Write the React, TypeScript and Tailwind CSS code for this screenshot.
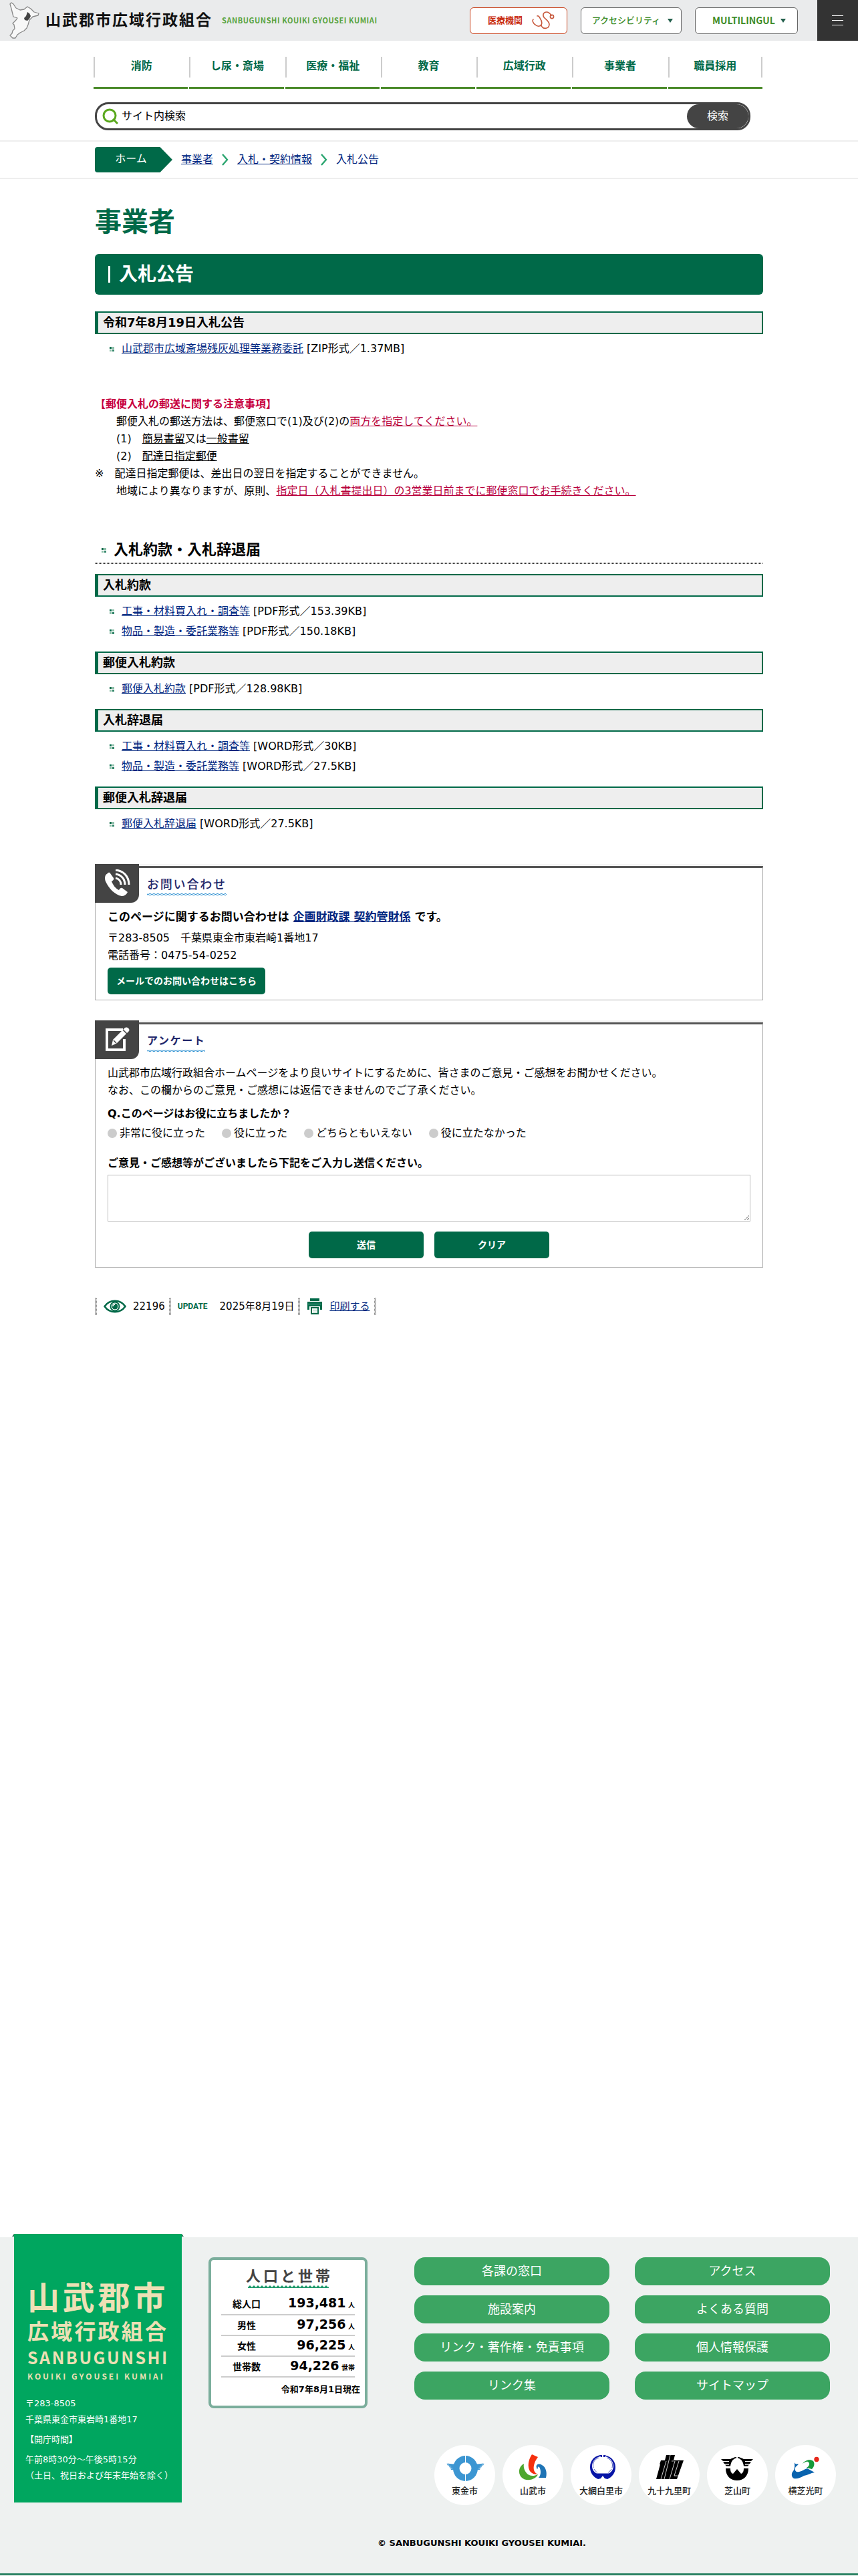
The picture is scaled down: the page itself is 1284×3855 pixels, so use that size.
import type { ReactNode } from "react";

const navItems = ["消防", "し尿・斎場", "医療・福祉", "教育", "広域行政", "事業者", "職員採用"];

const documentGroups = [
  {
    title: "入札約款",
    files: [
      { name: "工事・材料買入れ・調査等", info: "[PDF形式／153.39KB]" },
      { name: "物品・製造・委託業務等", info: "[PDF形式／150.18KB]" },
    ],
  },
  {
    title: "郵便入札約款",
    files: [{ name: "郵便入札約款", info: "[PDF形式／128.98KB]" }],
  },
  {
    title: "入札辞退届",
    files: [
      { name: "工事・材料買入れ・調査等", info: "[WORD形式／30KB]" },
      { name: "物品・製造・委託業務等", info: "[WORD形式／27.5KB]" },
    ],
  },
  {
    title: "郵便入札辞退届",
    files: [{ name: "郵便入札辞退届", info: "[WORD形式／27.5KB]" }],
  },
];

const answers = ["非常に役に立った", "役に立った", "どちらともいえない", "役に立たなかった"];

const population = [
  { label: "総人口", value: "193,481", unit: "人" },
  { label: "男性", value: "97,256", unit: "人" },
  { label: "女性", value: "96,225", unit: "人" },
  { label: "世帯数", value: "94,226", unit: "世帯" },
];

const footerLinks = [
  "各課の窓口",
  "アクセス",
  "施設案内",
  "よくある質問",
  "リンク・著作権・免責事項",
  "個人情報保護",
  "リンク集",
  "サイトマップ",
];

const municipalities: { name: string; mark: ReactNode }[] = [
  {
    name: "東金市",
    mark: (
      <g fill="#3c96d2">
        <path fillRule="evenodd" d="M45.500 16a18.500 19 0 1 0 0 38a18.500 19 0 1 0 0-38zM45.500 26a9 9 0 1 1 0 18a9 9 0 1 1 0-18z" />
        <path d="M17 27c5 1 9 2 14 1l-2 9h-5l-1-2h4l-6-2v-1h4l-7-2v-1h4zM74 27c-5 1-9 2-14 1l2 9h5l1-2h-4l6-2v-1h-4l7-2v-1h-4z" />
        <path d="M45 15h1v11h-1zM45 44h1v11h-1z" fill="#fff" />
      </g>
    ),
  },
  {
    name: "山武市",
    mark: (
      <>
        <path d="M31 28c-8 4-9 14-4 20 6 7 21 5 25-4-6 3-13 3-17-2-3-4-5-8-4-14z" fill="#4ea72e" />
        <path d="M43 14l9 4c-7 9-8 19-4 23 1 2 3 2 4 2-5 2-11-1-13-6-3-8 0-17 4-23z" fill="#f5300f" />
        <path d="M50 34c-2-5 4-7 8-4 6 3 8 11 6 19H53c3-3 4-9 2-14-1-3-4-3-3-1 0 2-2 2-2 0z" fill="#1f74b5" />
      </>
    ),
  },
  {
    name: "大網白里市",
    mark: (
      <>
        <path
          fillRule="evenodd"
          d="M46 15c-11 0-18 8-18 18 0 9 5 15 12 18l4-1 3-4 3 4 4 1c7-3 12-9 12-18 0-10-8-18-20-18zM47 16.500c9 0 16 7 16 15 0 5-3 9-7 11H38c-4-2-7-6-7-11 0-8 7-15 16-15z"
          fill="#0715a6"
        />
        <path d="M33 34c-2-7 2-13 8-15M61 34c2-7-2-13-8-15M34 36c1 2 3 4 5 5M60 36c-1 2-3 4-5 5" stroke="#0715a6" strokeWidth=".7" fill="none" />
        <path d="M46 14h2v4h-2z" fill="#fff" />
        <path d="M43 15h3v3h-2zM48 15h3l-1 3h-2z" fill="#0715a6" />
      </>
    ),
  },
  {
    name: "九十九里町",
    mark: (
      <>
        <path d="M40 15h13l-2 8h15l-10 28H25l6-22h-1l2-6h6z" fill="#000" />
        <path d="M46 15l-9 36M40 24l-8 27M53 24l-8 27M59 24l-7 22h5M48 24h3" stroke="#fff" strokeWidth=".8" fill="none" />
      </>
    ),
  },
  {
    name: "芝山町",
    mark: (
      <>
        <path d="M20 21h14c3-1 5-3 9-3v1.500c-5 1-8 5-9 12h-6l-2-2h6v-1.500h-7l-2-3h9V24h-9zM68 21H54c-3-1-5-3-9-3v1.500c5 1 8 5 9 12h6l2-2h-6v-1.500h7l2-3h-9V24h9z" fill="#000" />
        <path d="M27 35h7c0 4 1 7 4 8l6-7 6 7c3-1 4-4 4-8h7c0 11-7 18-17 18S27 46 27 35z" fill="#000" />
      </>
    ),
  },
  {
    name: "横芝光町",
    mark: (
      <>
        <path d="M28 26c1 3 4 3 6 2-1 3-5 4-5 7-1 4 2 6 6 5 5-1 8-4 12-5l11 6c-6 1-10 4-16 5-5 3-10 5-15 4-4-2-4-8-1-11 3-4 2-8 2-13z" fill="#0963ae" />
        <path d="M40 28c3-5 11-8 16-4 3 4 1 9-2 12l-8-2c4-2 6-7 2-9-2-1-5 1-8 3z" fill="#179a3b" />
        <circle cx="61" cy="21.500" r="3.700" fill="#e6281c" />
      </>
    ),
  },
];

function Bullet() {
  return (
    <svg className="h-[7px] w-[7px] shrink-0" viewBox="0 0 7 7">
      <path d="M0 0h3v3H0z" fill="#006948" />
      <path d="M4 0h3v3H4zM0 4h3v3H0z" fill="#8cbfa8" />
      <path d="M4 4h3v3H4z" fill="#33866a" />
    </svg>
  );
}

function BoxHeading({ children }: { children: ReactNode }) {
  return (
    <h3 className="border-2 border-l-[5px] border-[#006948] bg-[#eee] px-[7px] text-lg leading-[30px] font-bold">
      {children}
    </h3>
  );
}

function FileRow({ name, info }: { name: string; info: string }) {
  return (
    <li className="flex items-center pl-[22px] leading-[30px]">
      <Bullet />
      <span className="pl-[11px]">
        <a href="#" className="text-[#00267f] underline">{name}</a> {info}
      </span>
    </li>
  );
}

function Chevron() {
  return (
    <svg className="h-[18px] w-[10px]" viewBox="0 0 10 18" fill="none" stroke="#2aa56f" strokeWidth="2.400">
      <path d="M1 1l7 8-7 8" />
    </svg>
  );
}

function Divider() {
  return (
    <span className="h-[26px] w-[3px] bg-[repeating-conic-gradient(#888_0_25%,#eee_0_50%)] bg-[length:2px_2px]" />
  );
}

function Panel({ icon, title, titleClass, children }: { icon: ReactNode; title: string; titleClass: string; children: ReactNode }) {
  return (
    <section className="relative border-t-[3px] border-t-[#f5f5f5]">
      <div className="border border-t-[3px] border-[#aaa] border-t-[#555] px-[18px]">
        <div className="absolute -top-[3px] left-0 flex h-[58px] w-[66px] items-center justify-center rounded-br-xl bg-[#444]">
          {icon}
        </div>
        <h2 className="flex pt-2 pl-[59px]">
          <span className={titleClass}>
            {title}
            <span className="block h-[3px] bg-[repeating-conic-gradient(#2b8fd0_0_25%,#fff_0_50%)] bg-[length:2px_2px]" />
          </span>
        </h2>
        {children}
      </div>
    </section>
  );
}

function Header() {
  return (
    <header className="flex h-[61px] items-center bg-[#eaebec]">
      <a href="#" className="flex items-center pl-3">
        <svg className="h-[57px] w-[50px]" viewBox="12 2 50 57">
          <path
            d="M17 4l3 2 4 6 6 3 6-1 5-4 5 3 5 5 7 2-1 3-8 2-5 5-2 7-2 5-4 4-6 3-4 3-3 5h-4l-4-4 3-3 1-4 3-3-1-6-2-2 5-5 2-3-6-2-1-4-2-8-2-7z"
            fill="#f8f8f8"
            stroke="#888"
            strokeWidth="1.300"
            strokeLinejoin="round"
          />
          <path d="M41 18l3 2 2 4-2 4-3 3-4-1-1-3 3-3z" fill="#444" />
        </svg>
        <span className="pl-1.5 text-[23px] font-bold tracking-[2px] text-[#111]">山武郡市広域行政組合</span>
        <span className="pl-[14px] font-['Noto_Sans_CJK_JP',sans-serif] text-[11px] font-bold tracking-wider text-[#58a33e]">
          SANBUGUNSHI KOUIKI GYOUSEI KUMIAI
        </span>
      </a>
      <div className="ml-auto flex items-center gap-5">
        <a href="#" className="flex h-10 w-[146px] items-center justify-center gap-3.5 rounded-md border border-[#c8401a] bg-white pl-2 text-[13px] font-bold text-[#c8290b]">
          医療機関
          <svg className="h-[27px] w-[34px]" viewBox="0 0 34 27" fill="none" stroke="#c7583c" strokeWidth="1.600" strokeLinecap="round">
            <path d="M2 12c-2 2 0 6 3 8 3 3 7 3 9 0s0-7-2-10c-1-2-2-4-4-3" />
            <path d="M14 21c2 6 11 6 12-1 0-5-4-7-7-10-4-4-2-9 3-9 3 0 5 2 7 5" />
            <circle cx="30" cy="8" r="2.600" />
          </svg>
        </a>
        <button className="flex h-10 w-[151px] items-center justify-center gap-[11px] rounded-md border border-[#666] bg-white pl-1 text-[13px] font-medium text-[#3d8c27]">
          アクセシビリティ
          <span className="border-x-4 border-t-[6px] border-x-transparent border-t-[#24604d]" />
        </button>
        <button className="flex h-10 w-[154px] items-center justify-center gap-2 rounded-md border border-[#666] bg-white pl-2 font-['Noto_Sans_CJK_JP',sans-serif] text-[14px] font-bold text-[#3d8c27]">
          MULTILINGUL
          <span className="border-x-4 border-t-[6px] border-x-transparent border-t-[#24604d]" />
        </button>
        <button aria-label="メニュー" className="ml-[9px] flex h-[61px] w-[61px] flex-col items-center justify-center gap-[6px] bg-[#333]">
          <span className="h-px w-[17px] bg-white" />
          <span className="h-px w-[17px] bg-white" />
          <span className="h-px w-[17px] bg-white" />
        </button>
      </div>
    </header>
  );
}

function Footer() {
  return (
    <footer className="border-b-[3px] border-[#2a8262] bg-[#eef1f0]">
      <div className="flex items-start pl-[21px]">
        {/* Office information */}
        <div className="relative -mt-[5px] h-[402px] w-[251px] shrink-0 bg-[#00a65f] px-[17px] pt-[58px] text-white">
          <span className="absolute top-0 -left-[3px] border-b-[4px] border-l-[3px] border-b-[#1d6b4a] border-l-transparent" />
          <span className="absolute top-0 -right-[3px] border-r-[3px] border-b-[4px] border-r-transparent border-b-[#1d6b4a]" />
          <div className="pl-[3px] font-['Noto_Sans_CJK_JP',sans-serif] font-bold whitespace-nowrap text-[#ede0b5]">
            <p className="text-5xl leading-[68px] tracking-widest">山武郡市</p>
            <p className="text-[32px] leading-[36px] tracking-widest">広域行政組合</p>
            <p className="text-[25px] leading-[44px] tracking-widest">SANBUGUNSHI</p>
            <p className="text-xs leading-[14px] tracking-[3px]">KOUIKI GYOUSEI KUMIAI</p>
          </div>
          <div className="pt-[22px] text-[13px] leading-6 whitespace-nowrap">
            <p>〒283-8505</p>
            <p>千葉県東金市東岩崎1番地17</p>
            <p className="py-1.5">【開庁時間】</p>
            <p>午前8時30分〜午後5時15分</p>
            <p>（土日、祝日および年末年始を除く）</p>
          </div>
        </div>

        {/* Population */}
        <div className="mt-[30px] ml-10 h-[226px] w-[238px] shrink-0 rounded-lg border-4 border-[#7bae9c] bg-white px-[15px] pt-1.5">
          <h2 className="pl-1 text-center font-['Noto_Sans_CJK_JP',sans-serif] text-[22px] leading-8 font-bold tracking-[4px] text-[#444]">人口と世帯</h2>
          <svg className="mx-auto block h-1 w-[121px]" viewBox="0 0 121 4">
            <defs>
              <pattern id="scallop" width="6" height="4" patternUnits="userSpaceOnUse">
                <path d="M0 3l3-3 3 3v1H0z" fill="#1f9a6c" />
              </pattern>
            </defs>
            <rect width="121" height="4" fill="url(#scallop)" />
          </svg>
          <table className="mt-[9px] w-full">
            <tbody>
              {population.map((row) => (
                <tr key={row.label} className="h-[31px] border-b-2 border-[#ccc]">
                  <th className="w-[76px] text-center text-sm font-bold">{row.label}</th>
                  <td className="text-right text-[10px] leading-5 font-bold whitespace-nowrap">
                    <span className="text-[19px]">{row.value}</span> {row.unit}
                  </td>
                </tr>
              ))}
            </tbody>
          </table>
          <p className="-mr-2 pt-2 text-right text-[13px] font-bold">令和7年8月1日現在</p>
        </div>

        {/* Links */}
        <div className="mt-[30px] ml-[70px] flex-1 pr-[33px]">
          <div className="mr-[9px] grid grid-cols-2 gap-x-[38px] gap-y-[15px]">
            {footerLinks.map((link) => (
              <a key={link} href="#" className="rounded-2xl bg-[#3ca562] text-center text-lg leading-[42px] text-white">
                {link}
              </a>
            ))}
          </div>
          <div className="mt-[68px] flex justify-end gap-[11px]">
            {municipalities.map((town) => (
              <a key={town.name} href="#" className="flex h-[90px] w-[91px] shrink-0 flex-col items-center rounded-full bg-white pt-3 font-['Noto_Sans_CJK_JP',sans-serif] text-[13px] leading-5 font-medium whitespace-nowrap text-[#222]">
                <svg className="h-[46px] w-[90px]" viewBox="0 12 90 46">{town.mark}</svg>
                {town.name}
              </a>
            ))}
          </div>
        </div>
      </div>
      <p className="pt-[49px] pb-[37px] pl-[158px] text-center text-[13px] leading-4 font-bold">© SANBUGUNSHI KOUIKI GYOUSEI KUMIAI.</p>
    </footer>
  );
}

export default function App() {
  return (
    <div className="bg-white font-['DejaVu_Sans','Noto_Sans_CJK_JP',sans-serif] text-base text-black">
      <Header />

      {/* Navigation */}
      <nav className="mx-auto mt-6 flex max-w-[1004px] gap-0.5 pr-[3px]">
        {navItems.map((item) => (
          <a key={item} href="#" className="group flex-1 border-b-[3px] border-[#4a8a2a] pb-[14px] text-center font-bold text-[#006948]">
            <span className="block border-l-2 border-[#ccc] pb-[3px] leading-7 group-last:border-r-2">{item}</span>
          </a>
        ))}
      </nav>

      {/* Search */}
      <div className="mx-auto mt-5 max-w-[1000px]">
        <form className="mr-[19px] flex h-[42px] items-center rounded-[20px] border-[3px] border-[#444] pl-2">
          <svg className="h-6 w-6" viewBox="0 0 24 24" fill="none" stroke="#5aa81e" strokeWidth="3">
            <circle cx="11" cy="11" r="9" />
            <path d="M16 16l7 7" />
          </svg>
          <input type="text" aria-label="サイト内検索" placeholder="サイト内検索" className="min-w-0 flex-1 px-[5px] outline-none placeholder:text-black" />
          <button type="button" className="h-9 w-[92px] rounded-[18px] bg-[#444] text-white">検索</button>
        </form>
      </div>

      {/* Breadcrumb */}
      <div className="mt-[15px] border-y-2 border-[#eee] py-2">
        <div className="mx-auto flex h-[38px] max-w-[1000px] items-center gap-[13px] text-[#00267f]">
          <a href="#" className="h-[38px] w-[116px] rounded-l-sm bg-[#006948] pr-2 text-center leading-9 text-white [clip-path:polygon(0_0,84%_0,100%_50%,84%_100%,0_100%)]">
            ホーム
          </a>
          <a href="#" className="underline">事業者</a>
          <Chevron />
          <a href="#" className="underline">入札・契約情報</a>
          <Chevron />
          <span>入札公告</span>
        </div>
      </div>

      <main className="mx-auto max-w-[1000px] pt-[34px] pb-[1380px]">
        <p className="text-[40px] leading-[60px] font-bold text-[#006948]">事業者</p>
        <h1 className="mt-[18px] flex h-[61px] items-center rounded-md bg-[#006948] pl-5 text-[28px] font-bold text-white">
          <span className="mr-[13px] h-[25px] w-[3px] bg-white" />
          入札公告
        </h1>

        <div className="mt-[25px]">
          <BoxHeading>令和7年8月19日入札公告</BoxHeading>
          <ul className="mt-[7px]">
            <FileRow name="山武郡市広域斎場残灰処理等業務委託" info="[ZIP形式／1.37MB]" />
          </ul>
        </div>

        <div className="mt-[55px] leading-[26px]">
          <p className="font-bold text-[#c7003f]">【郵便入札の郵送に関する注意事項】</p>
          <p>　　郵便入札の郵送方法は、郵便窓口で(1)及び(2)の<u className="text-[#b8003c]">両方を指定してください。</u></p>
          <p>　　(1)　<u>簡易書留</u>又は<u>一般書留</u></p>
          <p>　　(2)　<u>配達日指定郵便</u></p>
          <p>※　配達日指定郵便は、差出日の翌日を指定することができません。</p>
          <p>　　地域により異なりますが、原則、<u className="text-[#b8003c]">指定日（入札書提出日）の3営業日前までに郵便窓口でお手続きください。</u></p>
        </div>

        <h2 className="mt-14 flex items-center pl-[10px] text-[22px] leading-[38px] font-bold">
          <Bullet />
          <span className="pl-[11px]">入札約款・入札辞退届</span>
        </h2>
        <div className="h-0.5 bg-[repeating-linear-gradient(90deg,#333_0_1px,#fff_1px_2px)]" />
        <div className="mt-[15px] flex flex-col gap-[15px]">
          {documentGroups.map((group) => (
            <div key={group.title}>
              <BoxHeading>{group.title}</BoxHeading>
              <ul className="mt-[7px]">
                {group.files.map((file) => (
                  <FileRow key={file.name} name={file.name} info={file.info} />
                ))}
              </ul>
            </div>
          ))}
        </div>

        {/* Contact */}
        <div className="mt-[45px]">
          <Panel
            title="お問い合わせ"
            titleClass="font-['Noto_Sans_CJK_JP',sans-serif] text-lg leading-[30px] font-medium tracking-widest text-[#23286b]"
            icon={
              <svg className="h-[42px] w-10" viewBox="0 0 40 42" fill="none" stroke="#fff">
                <path d="M6 6c-4 2-5 7-3 12 5 11 14 20 24 22 4 0 7-2 9-6l-8-6c-2-1-4 1-5 3-5-2-9-8-11-13 2-1 4-3 3-5L10 6C9 4 7 5 6 6z" fill="#fff" stroke="none" />
                <path d="M18 1c12 1 20 10 20 22M18 7c8 1 14 7 14 16M18 13c5 1 8 5 8 10" strokeWidth="3" />
              </svg>
            }
          >
            <p className="pt-4 text-[17px] leading-8 font-bold">
              このページに関するお問い合わせは <a href="#" className="text-[#00267f] underline">企画財政課 契約管財係</a> です。
            </p>
            <p className="pt-[3px] leading-[26px]">〒283-8505　千葉県東金市東岩崎1番地17</p>
            <p className="leading-[26px]">電話番号：0475-54-0252</p>
            <button className="mt-[5px] mb-2 block h-10 w-[236px] rounded-[5px] bg-[#006948] text-sm font-bold text-white">
              メールでのお問い合わせはこちら
            </button>
          </Panel>
        </div>

        {/* Questionnaire */}
        <div className="mt-[30px]">
          <Panel
            title="アンケート"
            titleClass="font-['Noto_Sans_CJK_JP',sans-serif] text-base leading-[30px] font-bold tracking-widest text-[#23286b]"
            icon={
              <svg className="h-[38px] w-[38px]" viewBox="0 0 38 38" fill="none">
                <path d="M28 4H4v30h26V18" stroke="#fff" strokeWidth="4" />
                <path d="M11 28l2-9L31 1c3-2 8 2 6 5L19 24z" fill="#fff" />
                <path d="M14 20l4 4M28 4l6 6" stroke="#444" strokeWidth="1.500" />
              </svg>
            }
          >
            <p className="pt-[19px] leading-[26px]">
              山武郡市広域行政組合ホームページをより良いサイトにするために、皆さまのご意見・ご感想をお聞かせください。
              <br />
              なお、この欄からのご意見・ご感想には返信できませんのでご了承ください。
            </p>
            <fieldset>
              <legend className="pt-[9px] leading-[26px] font-bold">Q.このページはお役に立ちましたか？</legend>
              <div className="flex gap-[25px] pt-[3px] leading-[26px]">
                {answers.map((answer) => (
                  <label key={answer} className="flex items-center gap-1">
                    <input type="radio" name="answer" className="h-[14px] w-[14px] appearance-none rounded-full bg-[#ccc] checked:bg-[#006948]" />
                    {answer}
                  </label>
                ))}
              </div>
            </fieldset>
            <label htmlFor="comment" className="block pt-[19px] leading-[26px] font-bold">
              ご意見・ご感想等がございましたら下記をご入力し送信ください。
            </label>
            <textarea id="comment" className="mt-1 block h-[70px] w-full border border-[#bbb] bg-white" />
            <div className="flex justify-center gap-4 pt-[15px] pb-[13px]">
              <button className="h-10 w-[172px] rounded-[5px] bg-[#006948] text-sm font-bold text-white">送信</button>
              <button className="h-10 w-[172px] rounded-[5px] bg-[#006948] text-sm font-bold text-white">クリア</button>
            </div>
          </Panel>
        </div>

        {/* Page info */}
        <div className="mt-[45px] flex items-center text-[15px] leading-[26px]">
          <Divider />
          <svg className="mr-[10px] ml-[10px] h-5 w-[34px]" viewBox="0 0 34 20" fill="none" stroke="#006948">
            <path d="M1.500 10C9-1 25-1 32.500 10 25 21 9 21 1.500 10z" strokeWidth="2.500" />
            <circle cx="17" cy="10" r="6.500" strokeWidth="2" />
            <circle cx="17" cy="10" r="4" fill="#006948" />
            <path d="M14 10a3 3 0 0 1 3-3" stroke="#fff" strokeWidth="1.500" />
          </svg>
          <span className="pr-1.5">22196</span>
          <Divider />
          <span className="pr-[18px] pl-[10px] font-['Roboto',sans-serif] text-xs font-bold text-[#006948]">UPDATE</span>
          <span className="pr-1.5">2025年8月19日</span>
          <Divider />
          <svg className="mr-[10px] ml-[10px] h-6 w-6" viewBox="0 0 24 24" fill="#006948">
            <path d="M5 0h14v4H5zM1 5h22v12h-3v-5H4v5H1zM6 13h12v11H6z" />
            <path d="M8 15h8v7H8z" fill="#fff" />
            <path d="M9 17h6v1H9zM9 20h6v1H9zM2 8h20v1H2z" fill="#6fae95" />
          </svg>
          <a href="#" className="mr-[7px] text-[#00267f] underline">印刷する</a>
          <Divider />
        </div>
      </main>

      <Footer />
    </div>
  );
}
